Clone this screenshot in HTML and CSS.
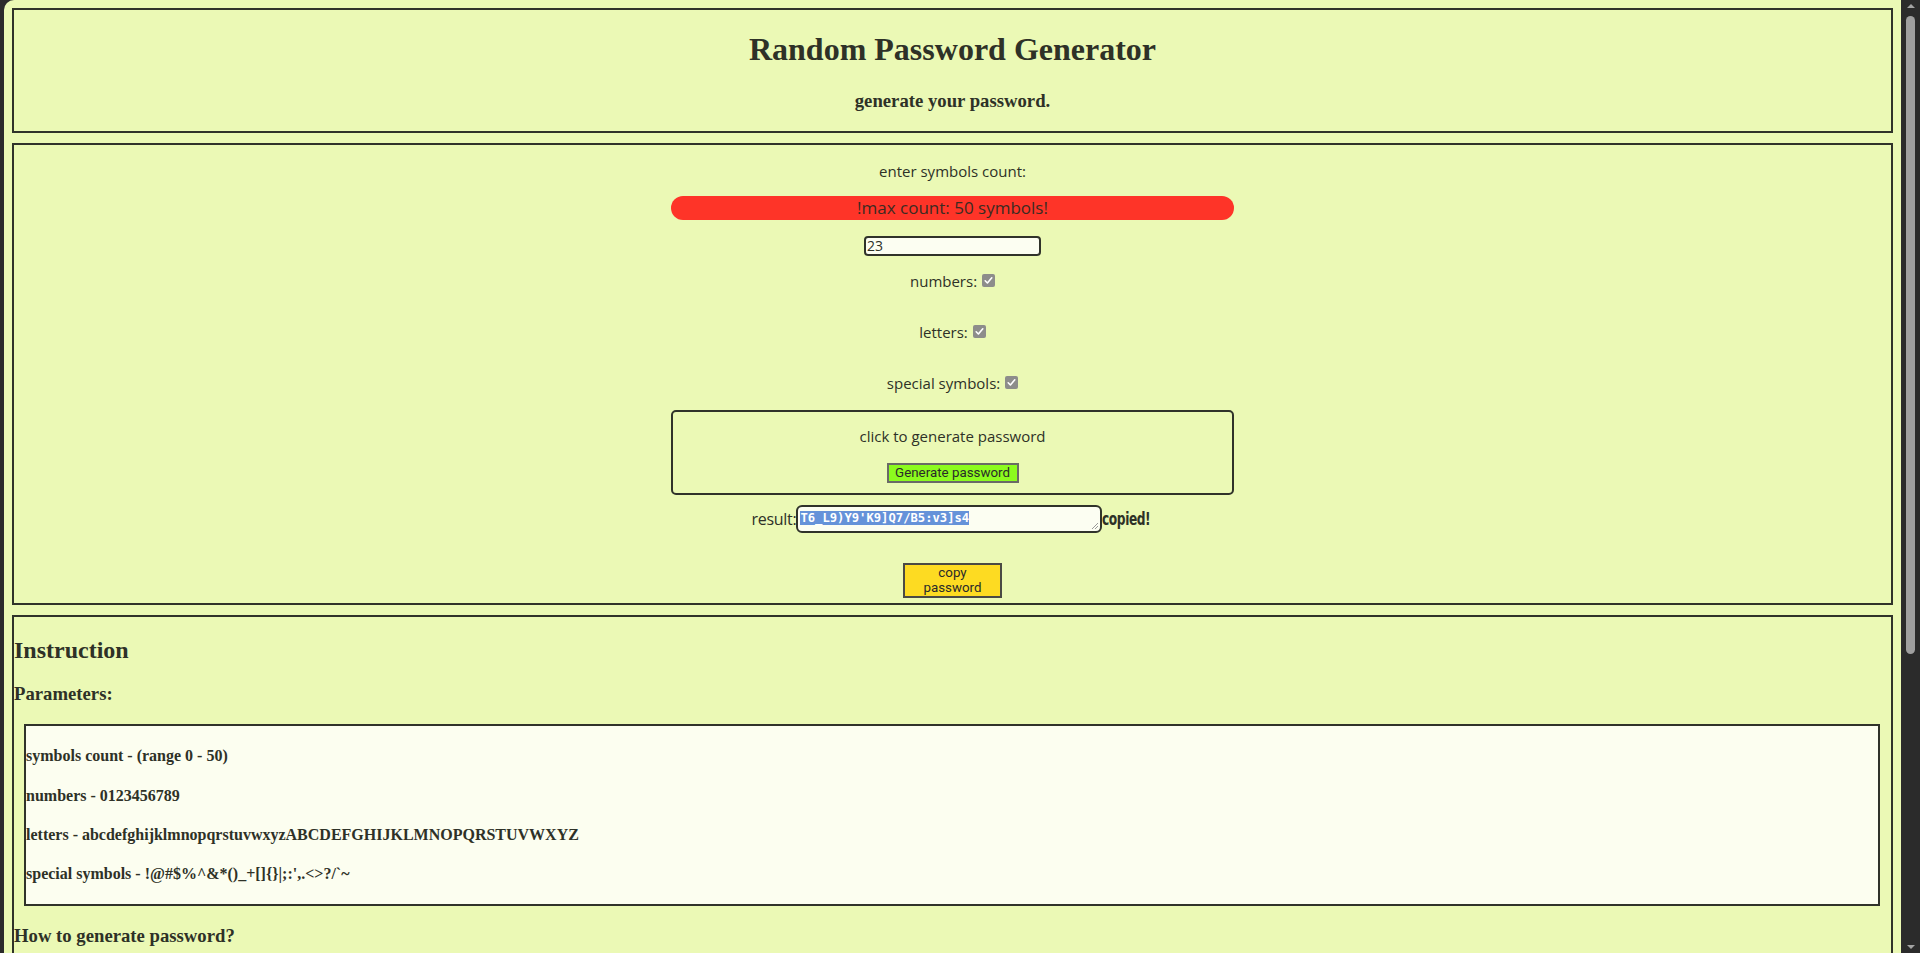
FILE: index.html
```html
<!DOCTYPE html>
<html lang="en">
<head>
<meta charset="utf-8">
<title>Random Password Generator</title>
<link rel="stylesheet" href="styles.css">
</head>
<body>
<div class="page">
  <header class="box header">
    <h1>Random Password Generator</h1>
    <h3>generate your password.</h3>
  </header>

  <main class="box generator">
    <p class="label">enter symbols count:</p>
    <p class="warning">!max count: 50 symbols!</p>
    <input class="count" type="text" value="23">
    <label class="option first">numbers: <span class="check"><svg width="13" height="13" viewBox="0 0 13 13"><path d="M3.2 6.8 L5.4 9 L9.8 3.8" stroke="#ffffff" stroke-width="1.6" fill="none" stroke-linecap="round" stroke-linejoin="round"/></svg></span></label>
    <label class="option">letters: <span class="check"><svg width="13" height="13" viewBox="0 0 13 13"><path d="M3.2 6.8 L5.4 9 L9.8 3.8" stroke="#ffffff" stroke-width="1.6" fill="none" stroke-linecap="round" stroke-linejoin="round"/></svg></span></label>
    <label class="option">special symbols: <span class="check"><svg width="13" height="13" viewBox="0 0 13 13"><path d="M3.2 6.8 L5.4 9 L9.8 3.8" stroke="#ffffff" stroke-width="1.6" fill="none" stroke-linecap="round" stroke-linejoin="round"/></svg></span></label>

    <div class="gen-box">
      <p class="label">click to generate password</p>
      <button class="gen-btn" type="button">Generate password</button>
    </div>

    <div class="result-row">
      <span class="result-label">result:</span>
      <div class="result"><span class="selected">T6_L9)Y9'K9]Q7/B5:v3]s4</span>
        <svg class="grip" width="9" height="9" viewBox="0 0 9 9"><path d="M8 2 L2 8 M8 5 L5 8" stroke="#9a9a9a" stroke-width="1" fill="none"/></svg>
      </div>
      <span class="copied"><span class="copied-text">copied!</span></span>
    </div>

    <button class="copy-btn" type="button">copy<br>password</button>
  </main>

  <section class="box instruction">
    <h2>Instruction</h2>
    <h3>Parameters:</h3>
    <div class="params">
      <h4>symbols count - (range 0 - 50)</h4>
      <h4>numbers - 0123456789</h4>
      <h4>letters - abcdefghijklmnopqrstuvwxyzABCDEFGHIJKLMNOPQRSTUVWXYZ</h4>
      <h4>special symbols - !@#$%^&amp;*()_+[]{}|;:',.&lt;&gt;?/`~</h4>
    </div>
    <h3>How to generate password?</h3>
    <p class="how">Enter symbols count, choose the parameters and click the button "Generate password".</p>
  </section>
</div>

<div class="scrollbar">
  <div class="arrow up"></div>
  <div class="track"><div class="thumb"></div></div>
  <div class="arrow down"></div>
</div>
</body>
</html>
```

FILE: styles.css
```css
html, body {
  height: 100%;
}

body {
  margin: 0;
  display: flex;
  overflow: hidden;
  background: #2b2b2b;
  color: #2e3127;
  font-family: "Liberation Serif", "Times New Roman", serif;
}

.page {
  flex: 1;
  margin-left: 4px;
  padding: 8px;
  background: #ebf9b5;
  border-top-left-radius: 10px;
  overflow: hidden;
  display: flex;
  flex-direction: column;
  gap: 10px;
}

.box {
  border: 2px solid #30332a;
  flex-shrink: 0;
}

/* header */
.header {
  text-align: center;
}

.header h1 {
  font-size: 32px;
  margin: 21.44px 0;
}

.header h3 {
  font-size: 18.72px;
  margin: 18.72px 0;
}

/* generator */
.generator {
  display: flex;
  flex-direction: column;
  align-items: center;
  padding: 16px 0 5px;
  font-family: "Open Sans", "Liberation Sans", sans-serif;
  font-size: 15px;
}

.label {
  margin: 0;
  line-height: 20px;
}

.warning {
  margin: 15px 0 0;
  width: 30%;
  height: 24px;
  line-height: 24px;
  text-align: center;
  background: #fe3428;
  border-radius: 12px;
  font-size: 17px;
  color: #3b2b22;
}

.count {
  margin-top: 16px;
  width: 177px;
  height: 20px;
  box-sizing: border-box;
  border: 2px solid #30332a;
  border-radius: 4px;
  background: #fcfef2;
  padding: 0 1px;
  font-family: "Open Sans", "Liberation Sans", sans-serif;
  font-size: 14px;
  color: #2e3127;
  outline: none;
}

.option {
  display: flex;
  align-items: center;
  height: 20px;
  margin-top: 31px;
  white-space: pre;
}

.option.first {
  margin-top: 15px;
}

.check {
  display: block;
  width: 13px;
  height: 13px;
  margin-left: 1px;
  background: #8d8d8b;
  border-radius: 2px;
}

.check svg {
  display: block;
}

.gen-box {
  margin-top: 17px;
  width: 30%;
  box-sizing: border-box;
  height: 85px;
  border: 2px solid #30332a;
  border-radius: 5px;
  padding-top: 14px;
  display: flex;
  flex-direction: column;
  align-items: center;
}

.gen-btn {
  margin-top: 17px;
  width: 132px;
  height: 20px;
  padding: 0;
  background: #8cfb1e;
  border: 2px solid #6a6a66;
  font-family: Roboto, "Liberation Sans", sans-serif;
  font-size: 13.33px;
  color: #2a2a2a;
}

.result-row {
  margin-top: 10px;
  display: flex;
  align-items: center;
}

.result-label {
  line-height: 20px;
  font-size: 16px;
  letter-spacing: -0.3px;
}

.result {
  position: relative;
  width: 306px;
  height: 28px;
  box-sizing: border-box;
  border: 2px solid #30332a;
  border-radius: 6px;
  background: #fcfef2;
  padding: 5px 2px 0;
  font-family: "DejaVu Sans Mono", "Liberation Mono", monospace;
  font-weight: bold;
  font-size: 12.2px;
  line-height: 12px;
}

.selected {
  background: #6592d9;
  color: #ffffff;
}

.grip {
  position: absolute;
  right: 1px;
  bottom: 1px;
}

.copied {
  width: 51px;
  overflow: visible;
  white-space: nowrap;
}

.copied-text {
  display: inline-block;
  font-family: "DejaVu Sans", "Liberation Sans", sans-serif;
  font-weight: bold;
  font-size: 17px;
  letter-spacing: -0.6px;
  transform: scaleX(0.72);
  transform-origin: left center;
}

.copy-btn {
  margin-top: 30px;
  width: 99px;
  height: 35px;
  padding: 0;
  background: #fddb22;
  border: 2px solid #4a4a44;
  font-family: Roboto, "Liberation Sans", sans-serif;
  font-size: 13.33px;
  line-height: 15px;
  color: #2a2a2a;
}

/* instruction */
.instruction h2 {
  font-size: 24px;
  margin: 19.92px 0;
}

.instruction h3 {
  font-size: 18.72px;
  margin: 18.72px 0;
}

.params {
  margin: 0 11px 0 10px;
  border: 2px solid #30332a;
  background: #fcfef0;
}

.params h4 {
  font-size: 16px;
  margin: 21.28px 0;
}

.how {
  margin: 16px 0;
}

/* scrollbar */
.scrollbar {
  width: 19px;
  background: #2b2b2b;
  display: flex;
  flex-direction: column;
  align-items: center;
}

.arrow {
  width: 0;
  height: 0;
  border-left: 4px solid transparent;
  border-right: 4px solid transparent;
  margin: 4px 0;
}

.arrow.up {
  border-bottom: 4px solid #a3a3a3;
}

.arrow.down {
  border-top: 4px solid #a3a3a3;
  margin-top: auto;
}

.track {
  flex: 1;
  width: 100%;
  display: flex;
  justify-content: center;
}

.thumb {
  width: 9px;
  height: 638px;
  margin-top: 4px;
  background: #9f9f9f;
  border-radius: 5px;
}
```
